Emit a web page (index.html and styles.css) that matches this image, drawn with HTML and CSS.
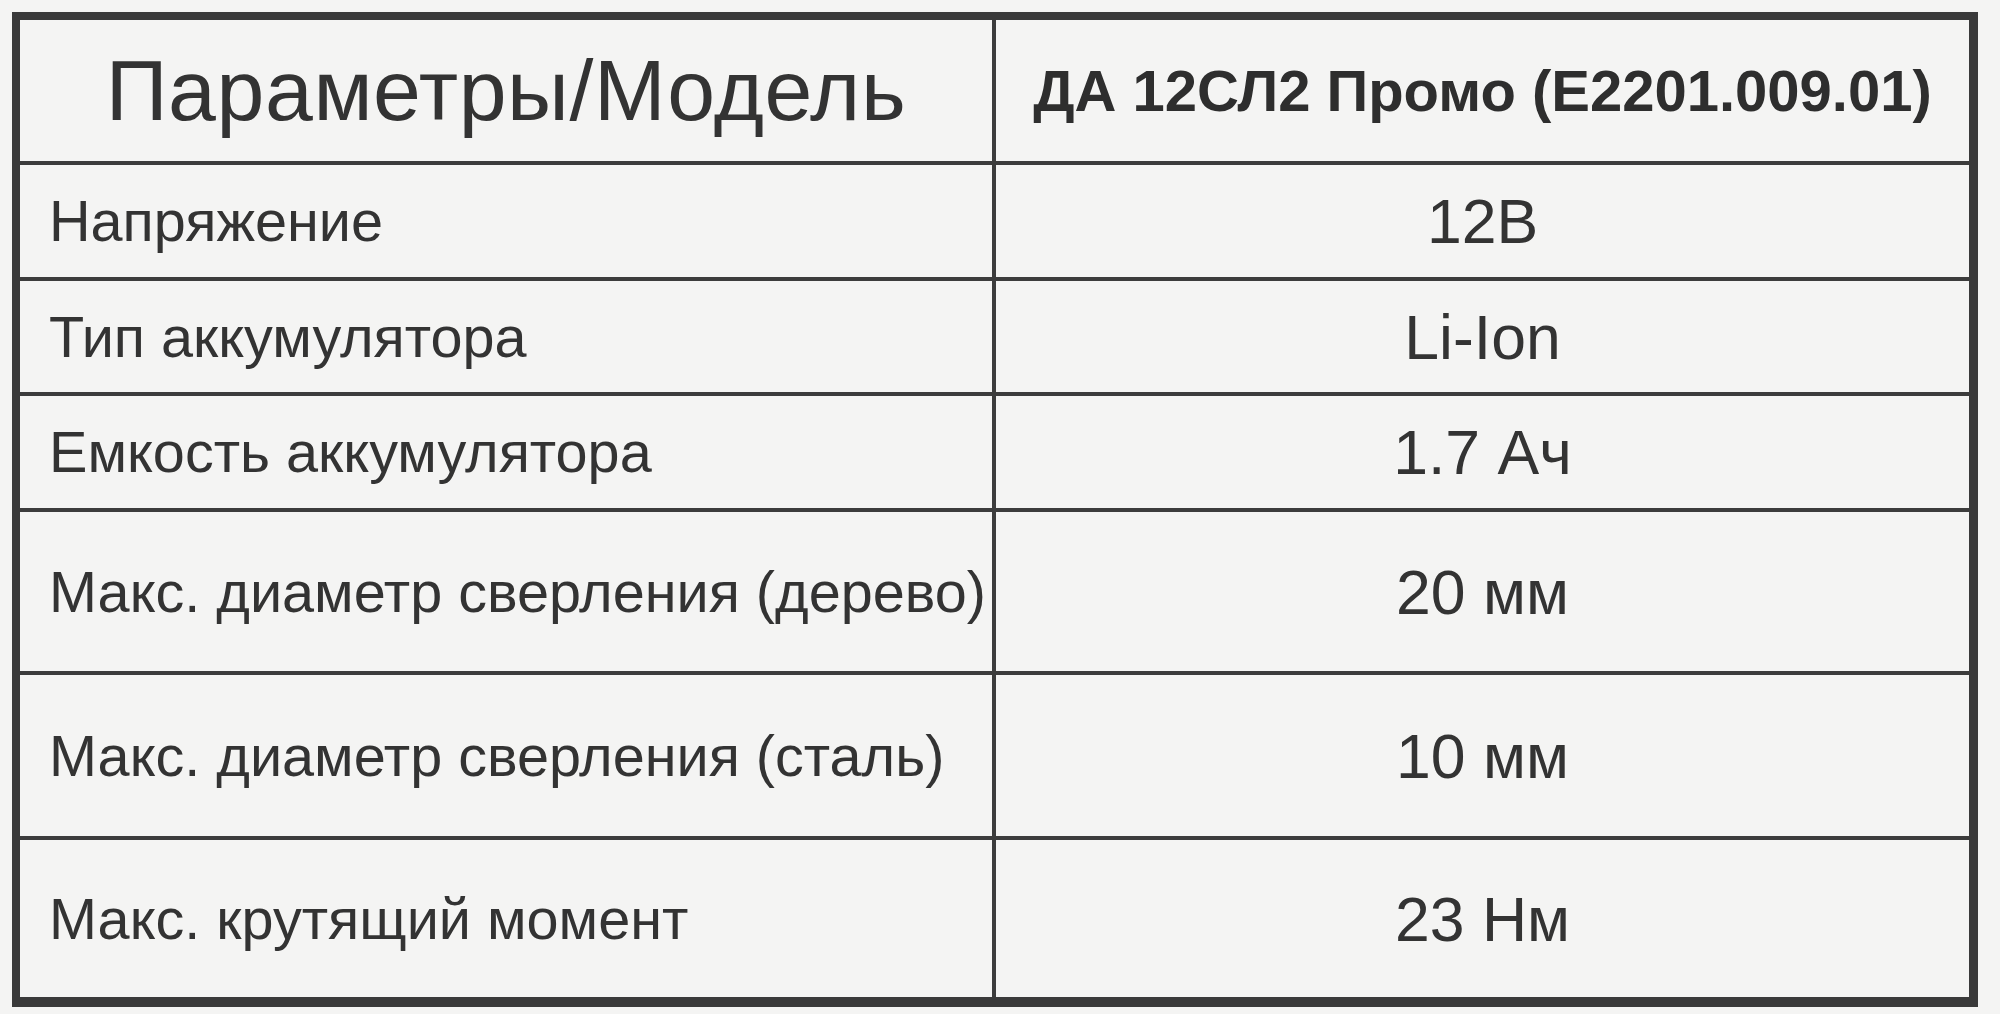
FILE: index.html
```html
<!DOCTYPE html>
<html lang="ru">
<head>
<meta charset="utf-8">
<title>Параметры/Модель</title>
<link rel="stylesheet" href="styles.css">
</head>
<body>
<div class="sheet">
  <div class="spec">
    <div class="cell head-left">Параметры/Модель</div>
    <div class="cell head-right">ДА 12СЛ2 Промо (Е2201.009.01)</div>

    <div class="cell label">Напряжение</div>
    <div class="cell value">12В</div>

    <div class="cell label">Тип аккумулятора</div>
    <div class="cell value">Li-Ion</div>

    <div class="cell label">Емкость аккумулятора</div>
    <div class="cell value">1.7 Ач</div>

    <div class="cell label">Макс. диаметр сверления (дерево)</div>
    <div class="cell value">20 мм</div>

    <div class="cell label">Макс. диаметр сверления (сталь)</div>
    <div class="cell value">10 мм</div>

    <div class="cell label">Макс. крутящий момент</div>
    <div class="cell value">23 Нм</div>
  </div>
</div>
</body>
</html>
```

FILE: styles.css
```css
html, body {
  margin: 0;
  padding: 0;
  background: #f4f4f3;
}

body {
  width: 2000px;
  height: 1014px;
  overflow: hidden;
  font-family: "Liberation Sans", Arial, sans-serif;
  color: #333333;
}

.sheet {
  padding: 12px 0 0 12px;
}

.spec {
  width: 1949px;
  display: grid;
  grid-template-columns: 972px 973px;
  grid-template-rows: 141px 112px 111px 112px 159px 161px 157px;
  gap: 4px;
  background: #3c3c3c;
  border-style: solid;
  border-color: #3a3a3a;
  border-width: 8px 9px 10px 8px;
}

.cell {
  background: #f4f4f3;
  display: flex;
  align-items: center;
  white-space: nowrap;
  overflow: visible;
}

.head-left {
  justify-content: center;
  font-size: 86px;
  letter-spacing: 0.6px;
}

.head-right {
  justify-content: center;
  font-size: 58px;
  font-weight: bold;
  color: #2e2e2e;
}

.label {
  padding-left: 29px;
  font-size: 57.6px;
}

.value {
  justify-content: center;
  font-size: 62.5px;
}
```
